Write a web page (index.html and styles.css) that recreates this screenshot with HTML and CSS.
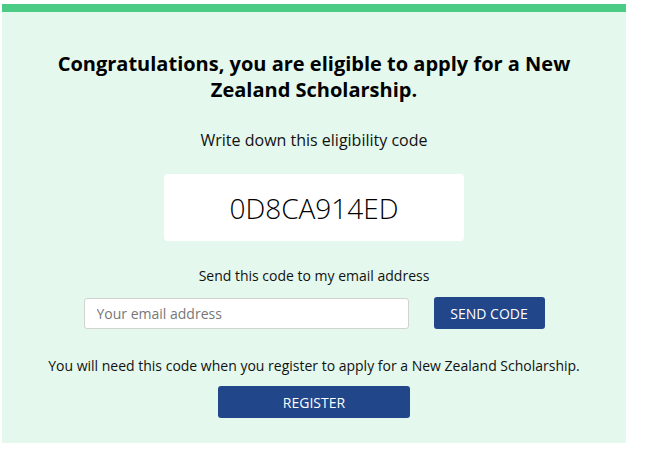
FILE: index.html
```html
<!DOCTYPE html>
<html lang="en">
<head>
<meta charset="utf-8">
<title>Eligibility</title>
<link rel="stylesheet" href="styles.css">
</head>
<body>
<main class="panel">
  <h1 class="title">Congratulations, you are eligible to apply for a New Zealand Scholarship.</h1>
  <p class="lead">Write down this eligibility code</p>
  <div class="code-box">0D8CA914ED</div>
  <p class="send-label">Send this code to my email address</p>
  <form class="send-row">
    <input class="email" type="email" placeholder="Your email address">
    <button class="btn btn-send" type="button">SEND CODE</button>
  </form>
  <p class="note">You will need this code when you register to apply for a New Zealand Scholarship.</p>
  <button class="btn btn-register" type="button">REGISTER</button>
</main>
</body>
</html>
```

FILE: styles.css
```css
html, body {
  margin: 0;
  padding: 0;
  background: #ffffff;
}
body {
  padding: 4px 0 0 2px;
  font-family: "Open Sans", "Noto Sans", sans-serif;
  color: #111;
}
.panel {
  width: 624px;
  height: 439px;
  background: #e4f8ed;
  border-top: 8px solid #4ccb84;
  display: flex;
  flex-direction: column;
  align-items: center;
  padding: 0 40px;
  box-sizing: border-box;
}
.title {
  margin: 39px 0 0;
  font-size: 20px;
  line-height: 26px;
  font-weight: 700;
  text-align: center;
  color: #000;
}
.lead {
  margin: 26px 0 0;
  font-size: 16px;
  line-height: 22px;
}
.code-box {
  margin-top: 23px;
  width: 300px;
  height: 67px;
  background: #fff;
  border-radius: 4px;
  display: flex;
  align-items: center;
  justify-content: center;
  font-size: 28px;
  font-weight: 300;
  color: #000;
}
.send-label {
  margin: 25px 0 0;
  font-size: 14px;
  line-height: 20px;
}
.send-row {
  margin: 11px 0 0;
  display: flex;
  gap: 25px;
  align-items: center;
}
.email {
  width: 325px;
  height: 31px;
  box-sizing: border-box;
  border: 1px solid #cfd4d1;
  border-radius: 3px;
  padding: 0 12px;
  font-family: inherit;
  font-size: 14px;
  background: #fff;
}
.email::placeholder {
  color: #777;
}
.btn {
  background: #21468a;
  color: #fff;
  border: none;
  border-radius: 3px;
  font-family: inherit;
  font-size: 14px;
  cursor: pointer;
}
.btn-send {
  width: 111px;
  height: 32px;
}
.note {
  margin: 27px 0 0;
  font-size: 14px;
  line-height: 20px;
}
.btn-register {
  margin-top: 10px;
  width: 192px;
  height: 32px;
}
```
